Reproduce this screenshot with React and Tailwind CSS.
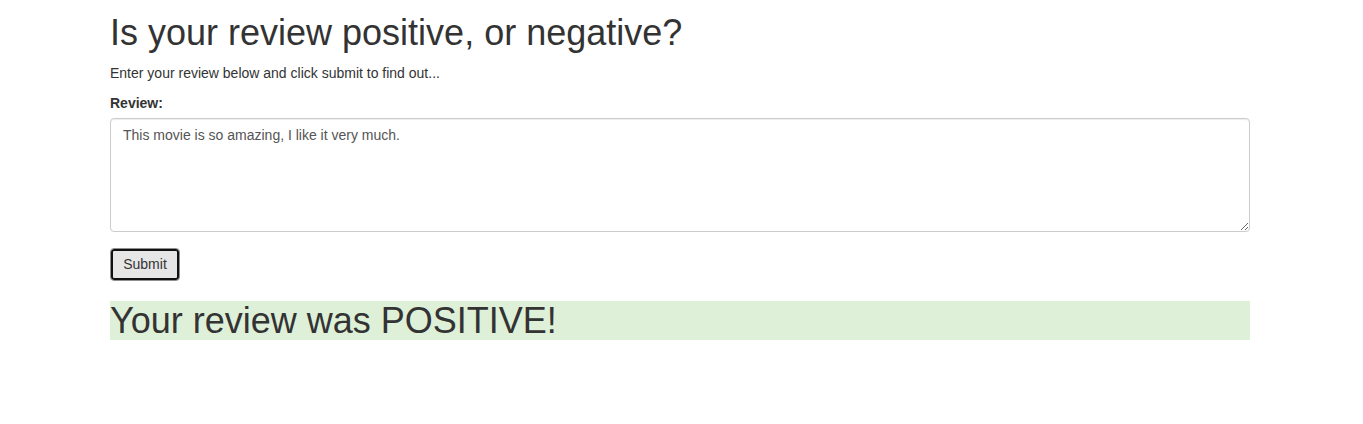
export default function App() {
  return (
    <div className="min-h-screen bg-white font-['Liberation_Sans',Arial,sans-serif] text-[14px] leading-[20px] text-[#333]">
      <div className="w-[1170px] ml-[95px] px-[15px]">
        <h1 className="mt-[13px] mb-[10px] text-[36px] leading-[1.1]">Is your review positive, or negative?</h1>
        <p className="mb-[10px]">Enter your review below and click submit to find out...</p>
        <form onSubmit={(e) => e.preventDefault()}>
          <div className="mb-[16px]">
            <label className="block mb-[5px] font-bold">Review:</label>
            <textarea
              rows={5}
              defaultValue="This movie is so amazing, I like it very much."
              className="block w-full h-[114px] px-[12px] py-[6px] border border-[#ccc] rounded-[4px] text-[14px] leading-[20px] text-[#555] shadow-[inset_0_1px_1px_rgba(0,0,0,0.075)] outline-none"
            />
          </div>
          <button
            type="submit"
            className="w-[70px] h-[33px] bg-[#e6e6e6] border border-[#8f8f8f] rounded-[4px] shadow-[inset_0_0_0_2px_#111] text-[14px] text-[#333]"
          >
            Submit
          </button>
        </form>
        <h1 className="mt-[20px] text-[36px] leading-[1.1] bg-[#dff0d8]">Your review was POSITIVE!</h1>
      </div>
    </div>
  )
}
